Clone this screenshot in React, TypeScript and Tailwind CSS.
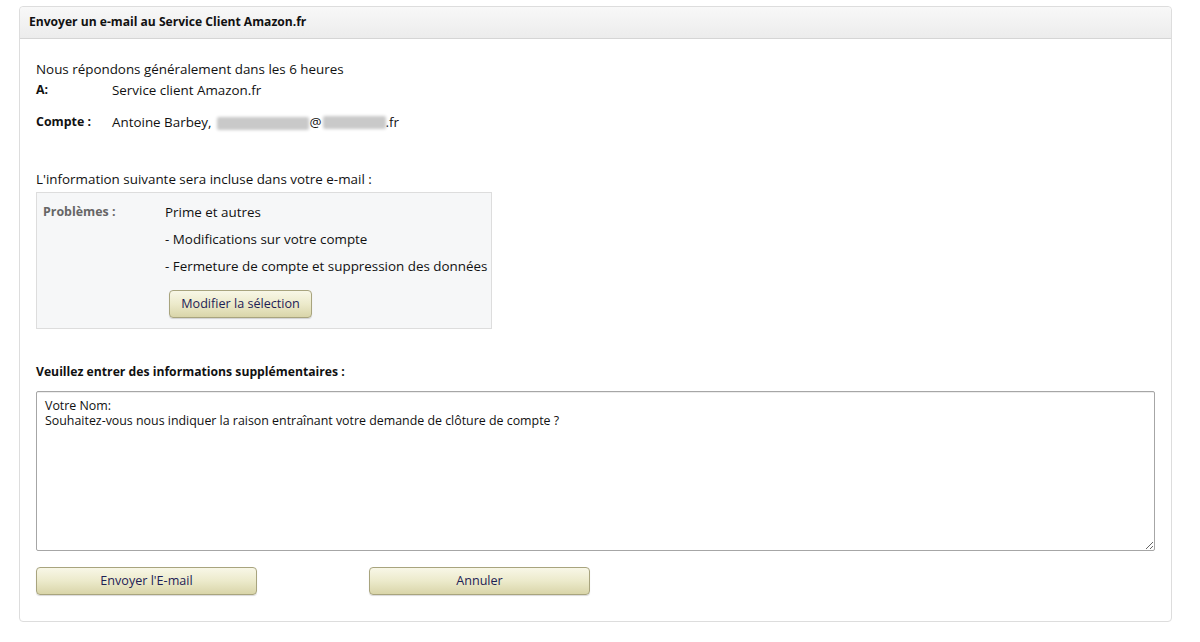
const font = { fontFamily: '"Open Sans", "Noto Sans", Arial, sans-serif' };

function BeigeButton({ label, className }: { label: string; className?: string }) {
  return (
    <button
      className={
        "h-[28px] rounded-[4px] border border-[#a8a47e] bg-gradient-to-b from-[#f8f7e7] via-[#eceacb] to-[#d9d5a9] text-[12.6px] text-[#1d2155] shadow-[0_1px_1px_rgba(0,0,0,0.15)] " +
        (className ?? "")
      }
    >
      {label}
    </button>
  );
}

function Blur({ w }: { w: number }) {
  return (
    <span
      className="inline-block h-[13px] rounded-[2px] bg-[#c9c9c9] align-middle blur-[1.5px]"
      style={{ width: w }}
    />
  );
}

export default function App() {
  return (
    <div className="min-h-[642px] bg-white pt-[6px] pl-[19px] pr-[28px] pb-[20px] text-[#111]" style={font}>
      <div className="rounded-[4px] border border-[#dddddd]">
        <div className="flex h-[32px] items-center rounded-t-[4px] border-b border-[#d5d5d5] bg-gradient-to-b from-[#f8f8f8] to-[#ececec] pl-[9px] text-[12.1px] font-bold">
          Envoyer un e-mail au Service Client Amazon.fr
        </div>

        <div className="px-[16px] pt-[20px] pb-[26px] text-[13.4px]">
          <p className="leading-[20px]">Nous répondons généralement dans les 6 heures</p>
          <div className="mt-[1px] flex leading-[20px]">
            <span className="w-[76px] text-[12.4px] font-bold">A:</span>
            <span>Service client Amazon.fr</span>
          </div>
          <div className="mt-[12px] flex items-center leading-[20px]">
            <span className="w-[76px] text-[12.4px] font-bold">Compte :</span>
            <span>Antoine Barbey,</span>
            <span className="ml-[5px]"><Blur w={92} /></span>
            <span className="mx-[1px]">@</span>
            <Blur w={63} />
            <span>.fr</span>
          </div>

          <p className="mt-[37px] leading-[20px]">L'information suivante sera incluse dans votre e-mail :</p>

          <div className="mt-[3px] w-[456px] border border-[#dddddd] bg-[#f6f7f8] pt-[8px] pb-[10px] pl-[6px]">
            <div className="flex">
              <span className="w-[122px] text-[12.4px] font-bold leading-[22px] text-[#666]">Problèmes :</span>
              <div className="flex flex-col gap-[5px] leading-[22px]">
                <span>Prime et autres</span>
                <span>- Modifications sur votre compte</span>
                <span className="whitespace-nowrap">- Fermeture de compte et suppression des données</span>
                <div className="mt-[8px] pl-[4px]">
                  <BeigeButton label="Modifier la sélection" className="w-[143px]" />
                </div>
              </div>
            </div>
          </div>

          <p className="mt-[33px] text-[12.2px] font-bold leading-[20px]">Veuillez entrer des informations supplémentaires :</p>

          <textarea
            className="mt-[9px] block h-[160px] w-full resize-y rounded-[2px] border border-[#a6a6a6] px-[8px] py-[6px] text-[12.4px] leading-[15px] text-[#111] shadow-[inset_0_1px_0_rgba(0,0,0,0.07)] outline-none"
            style={font}
            defaultValue={"Votre Nom:\nSouhaitez-vous nous indiquer la raison entraînant votre demande de clôture de compte ?"}
          />

          <div className="mt-[16px] flex gap-[112px]">
            <BeigeButton label="Envoyer l'E-mail" className="w-[221px]" />
            <BeigeButton label="Annuler" className="w-[221px]" />
          </div>
        </div>
      </div>
    </div>
  );
}
